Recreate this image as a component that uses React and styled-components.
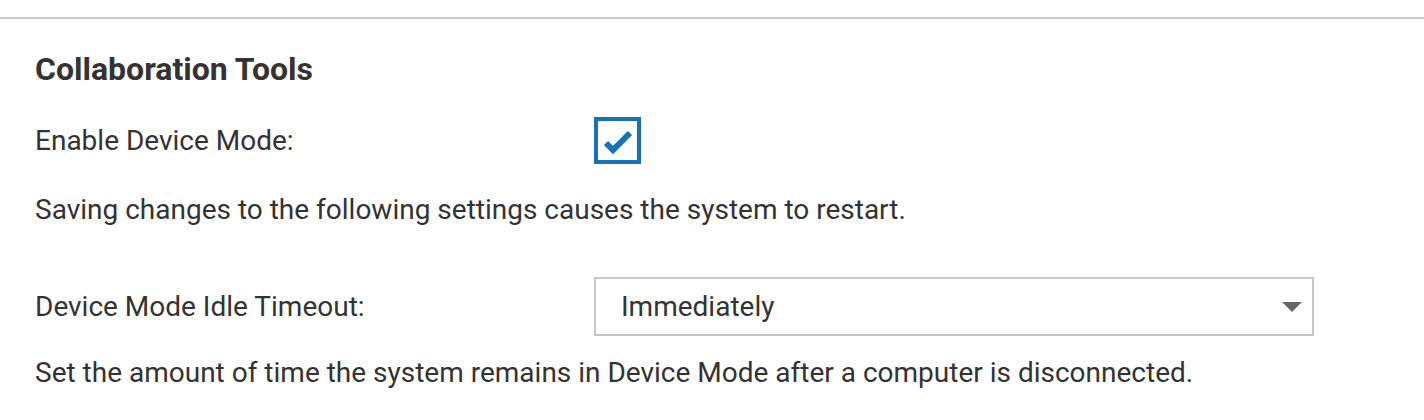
import React from "react";
import styled, { createGlobalStyle } from "styled-components";

const GlobalStyle = createGlobalStyle`
  body {
    margin: 0;
    background: #fff;
    font-family: Roboto, "Liberation Sans", sans-serif;
    color: #333;
  }
`;

const Page = styled.div`
  padding-top: 17px;
`;

const Section = styled.div`
  border-top: 2px solid #c8c8c8;
  padding: 31px 35px 0;
`;

const Title = styled.h2`
  margin: 0;
  font-size: 32px;
  font-weight: 700;
  line-height: 38px;
`;

const Row = styled.div`
  display: flex;
  align-items: center;
  margin-top: ${({ top }) => top}px;
`;

const Label = styled.div`
  width: 559px;
  font-size: 28px;
  line-height: 34px;
`;

const Note = styled.div`
  font-size: 28px;
  line-height: 34px;
  margin-top: ${({ top }) => top}px;
`;

const Checkbox = styled.div`
  box-sizing: border-box;
  width: 47px;
  height: 47px;
  border: 4px solid #1571b8;
  display: flex;
  align-items: center;
  justify-content: center;
`;

const Select = styled.div`
  box-sizing: border-box;
  width: 720px;
  height: 59px;
  border: 2px solid #c8c8c8;
  display: flex;
  align-items: center;
  justify-content: space-between;
  padding: 0 10px 0 25px;
  font-size: 28px;
`;

const Arrow = styled.span`
  width: 0;
  height: 0;
  border-left: 10px solid transparent;
  border-right: 10px solid transparent;
  border-top: 10px solid #666;
`;

export default function App() {
  return (
    <Page>
      <GlobalStyle />
      <Section>
        <Title>Collaboration Tools</Title>
        <Row top={29}>
          <Label>Enable Device Mode:</Label>
          <Checkbox>
            <svg width="39" height="39" viewBox="0 0 39 39">
              <polyline
                points="8,22 15,29 32,12"
                fill="none"
                stroke="#1571b8"
                strokeWidth="6"
              />
            </svg>
          </Checkbox>
        </Row>
        <Note top={29}>
          Saving changes to the following settings causes the system to restart.
        </Note>
        <Row top={50}>
          <Label>Device Mode Idle Timeout:</Label>
          <Select>
            <span>Immediately</span>
            <Arrow />
          </Select>
        </Row>
        <Note top={20}>
          Set the amount of time the system remains in Device Mode after a
          computer is disconnected.
        </Note>
      </Section>
    </Page>
  );
}
